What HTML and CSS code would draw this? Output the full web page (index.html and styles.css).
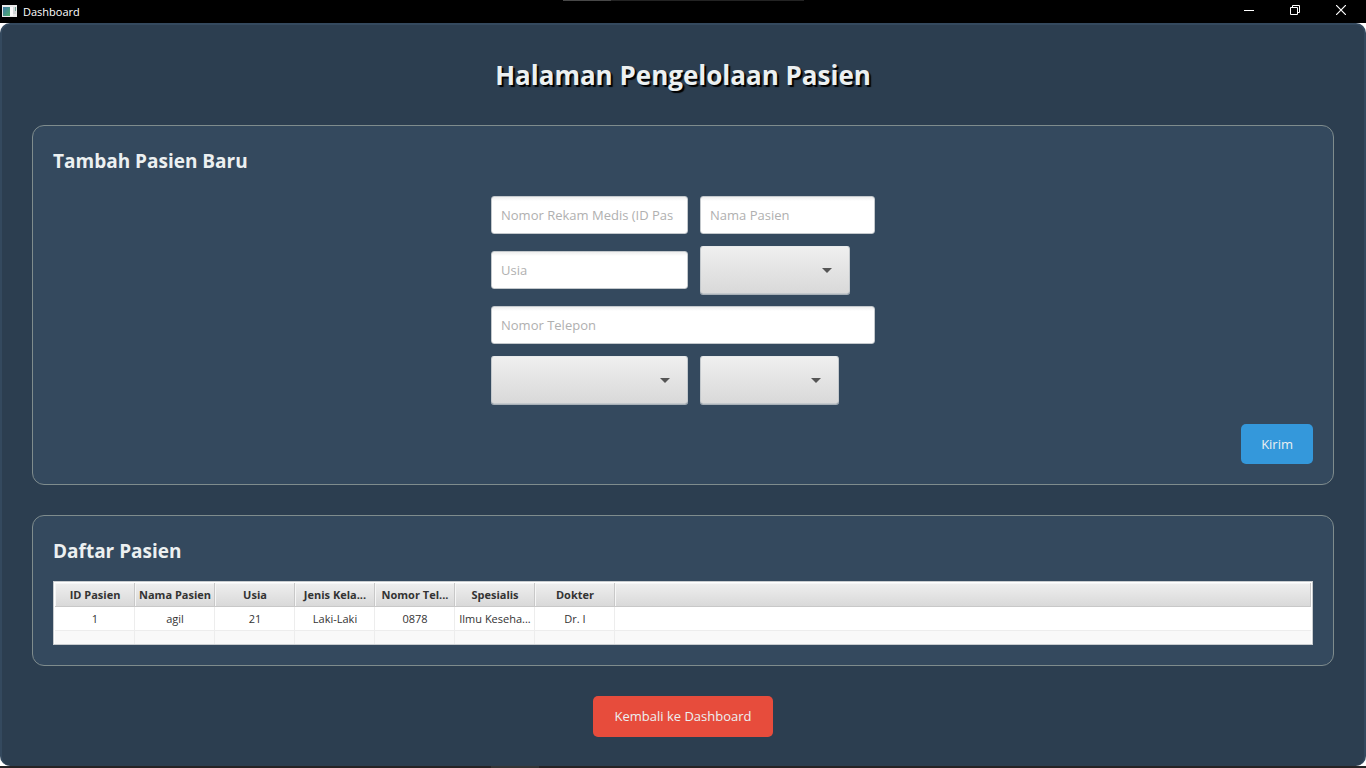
FILE: index.html
```html
<!DOCTYPE html>
<html lang="id">
<head>
<meta charset="utf-8">
<title>Dashboard</title>
<link rel="stylesheet" href="styles.css">
</head>
<body>
<header class="titlebar">
  <span class="titlebar-edge"></span>
  <svg class="app-icon" width="16" height="16" viewBox="0 0 16 16" aria-hidden="true">
    <defs><linearGradient id="pane" x1="0" y1="0" x2="1" y2="1"><stop offset="0" stop-color="#3f78a8"/><stop offset="1" stop-color="#4fae6a"/></linearGradient></defs>
    <rect x="0" y="2" width="15" height="12" fill="#e9e9e9"/>
    <rect x="1" y="4" width="7" height="9" fill="url(#pane)"/>
    <rect x="8" y="4" width="3" height="9" fill="#fafafa"/>
    <rect x="11" y="4" width="3" height="7" fill="#d3d6d8"/>
    <rect x="13" y="4" width="1" height="4" fill="#6fa593"/>
  </svg>
  <span class="titlebar-text">Dashboard</span>
  <div class="window-controls">
    <button class="window-button" type="button" aria-label="Minimize"><svg width="10" height="10" viewBox="0 0 10 10"><path d="M0 5.500H10" stroke="#fff"/></svg></button>
    <button class="window-button" type="button" aria-label="Restore"><svg width="10" height="10" viewBox="0 0 10 10" fill="none" stroke="#fff"><path d="M.5 2.500H7.500V9.500H.5ZM2.500 2.500V.5H9.500V7.500H7.500"/></svg></button>
    <button class="window-button" type="button" aria-label="Close"><svg width="10" height="10" viewBox="0 0 10 10"><path d="M0 0L10 10M10 0L0 10" stroke="#fff" stroke-width="1.200"/></svg></button>
  </div>
</header>
<div class="window">
<main class="page">
  <h1 class="page-title">Halaman Pengelolaan Pasien</h1>
  <form class="card">
    <h2 class="card-title">Tambah Pasien Baru</h2>
    <div class="fields">
      <input class="field" type="text" placeholder="Nomor Rekam Medis (ID Pas" aria-label="Nomor Rekam Medis (ID Pasien)">
      <input class="field" type="text" placeholder="Nama Pasien" aria-label="Nama Pasien">
      <input class="field" type="text" placeholder="Usia" aria-label="Usia">
      <select class="combo combo-gender" aria-label="Jenis Kelamin"><option></option></select>
      <input class="field field-wide" type="text" placeholder="Nomor Telepon" aria-label="Nomor Telepon">
      <select class="combo" aria-label="Spesialis"><option></option></select>
      <select class="combo combo-doctor" aria-label="Dokter"><option></option></select>
    </div>
    <button class="button button-submit" type="button">Kirim</button>
  </form>
  <section class="card">
    <h2 class="card-title">Daftar Pasien</h2>
    <div class="table-frame">
      <table class="patients">
        <colgroup><col class="col" span="7"><col></colgroup>
        <thead>
          <tr><th>ID Pasien</th><th>Nama Pasien</th><th>Usia</th><th>Jenis Kela...</th><th>Nomor Tel...</th><th>Spesialis</th><th>Dokter</th><th></th></tr>
        </thead>
        <tbody>
          <tr><td>1</td><td>agil</td><td>21</td><td>Laki-Laki</td><td>0878</td><td>Ilmu Keseha...</td><td>Dr. I</td><td></td></tr>
          <tr class="row-empty"><td></td><td></td><td></td><td></td><td></td><td></td><td></td><td></td></tr>
        </tbody>
      </table>
    </div>
  </section>
  <button class="button button-back" type="button">Kembali ke Dashboard</button>
</main>
</div>
<footer class="bottom-edge"></footer>
</body>
</html>
```
FILE: styles.css
```css
* { box-sizing: border-box; }

body {
  margin: 0;
  min-height: 100vh;
  display: flex;
  flex-direction: column;
  background: #fff;
  font-family: "Open Sans", "Noto Sans", sans-serif;
  font-size: 13px;
}

.titlebar {
  position: relative;
  display: flex;
  align-items: center;
  height: 23px;
  padding-left: 2px;
  background: #000;
  color: #fff;
}

.titlebar-edge {
  position: absolute;
  top: 0;
  left: 563px;
  width: 241px;
  height: 1px;
  background: linear-gradient(to right, #484848 48px, #232323 48px);
}

.app-icon { margin-bottom: 2px; }

.titlebar-text {
  margin-left: 5px;
  font-size: 11px;
  line-height: 23px;
}

.window-controls {
  display: flex;
  align-self: flex-start;
  margin-left: auto;
  margin-right: 2px;
}

.window-button {
  display: flex;
  align-items: center;
  justify-content: center;
  width: 46px;
  height: 20px;
  padding: 0;
  border: 0;
  background: none;
}

.window {
  flex: 1;
  display: flex;
}

.bottom-edge {
  height: 2px;
  background: linear-gradient(to right, #262324 491px, #353535 491px, #353535 539px, #262324 539px);
}

.page {
  flex: 1;
  display: flex;
  flex-direction: column;
  align-items: stretch;
  gap: 30px;
  padding: 30px 30px 28px;
  border: 2px solid #34495e;
  border-bottom-width: 0;
  border-radius: 10px;
  background: #2c3e50;
}

.page-title {
  margin: 0;
  color: #ecf0f1;
  font-size: 26px;
  font-weight: 700;
  line-height: 40px;
  text-align: center;
  text-shadow: 2px 2px 1px #000;
}

.card {
  display: flex;
  flex-direction: column;
  gap: 15px;
  padding: 20px;
  border: 1px solid #7f8c8d;
  border-radius: 12px;
  background: #34495e;
}

.card-title {
  margin: 0;
  color: #ecf0f1;
  font-size: 19px;
  font-weight: 700;
  line-height: 30px;
}

.fields {
  display: grid;
  grid-template-columns: 197px 175px;
  align-items: center;
  justify-content: center;
  gap: 12px;
  padding: 5px 0;
}

.field {
  width: 100%;
  height: 38px;
  padding: 0 9px;
  border: 1px solid #c3c8cc;
  border-radius: 3px;
  background: linear-gradient(#eee, #fff 4px);
  color: #333;
  font: inherit;
}

.field::placeholder { color: #b0b0b0; opacity: 1; }

.field-wide { grid-column: span 2; }

.combo {
  appearance: none;
  width: 100%;
  height: 48px;
  border: 1px solid #c3c8cc;
  border-top-color: #e8eaeb;
  border-radius: 3px;
  background:
    url("data:image/svg+xml,%3Csvg xmlns='http://www.w3.org/2000/svg' width='10' height='5'%3E%3Cpath d='M0 0H10L5 5Z' fill='%23555'/%3E%3C/svg%3E") no-repeat right 17px center,
    linear-gradient(#efefef, #d9d9d9);
  box-shadow: 0 1px #a9b1b8;
}

.combo-gender { width: 150px; }
.combo-doctor { width: 139px; }

.button {
  padding: 10px 20px;
  border: 0;
  border-radius: 5px;
  color: #ecf0f1;
  font: inherit;
  line-height: 20px;
}

.button-submit { align-self: flex-end; background: #3498db; }

.button-back {
  align-self: center;
  padding: 10px 21px;
  background: #e74c3c;
  line-height: 21px;
}

.table-frame {
  height: 64px;
  padding: 1px;
  border: 1px solid #c8cccf;
  background: #fff;
  overflow: hidden;
}

.patients {
  width: 100%;
  table-layout: fixed;
  border-collapse: separate;
  border-spacing: 0;
  color: #333;
  font-size: 11px;
  line-height: 23px;
}

.col { width: 80px; }

.patients th,
.patients td {
  height: 24px;
  padding: 0 2px 0 3px;
  border-right: 1px solid #ededed;
  border-bottom: 1px solid #ededed;
  text-align: center;
  white-space: nowrap;
}

.patients th {
  border-color: #c8c8c8;
  background: linear-gradient(#efefef, #d9d9d9);
  box-shadow: inset 1px 1px #f6f6f6;
}

.patients td:last-child { border-right: 0; }
.row-empty td { background: #f9f9f9; }
```
